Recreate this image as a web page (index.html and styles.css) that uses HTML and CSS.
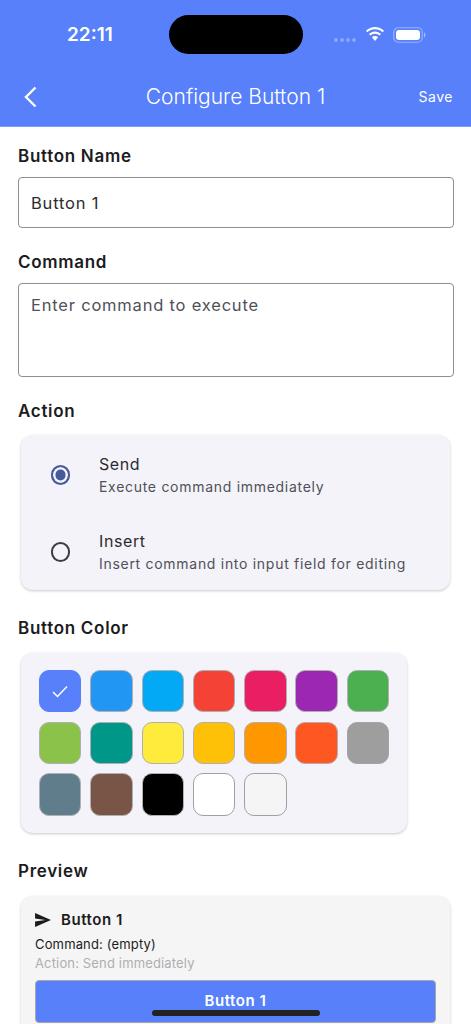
FILE: index.html
```html
<!DOCTYPE html>
<html lang="en">
<head>
<meta charset="utf-8">
<title>Configure Button 1</title>
<link rel="stylesheet" href="styles.css">
</head>
<body>
<div class="screen">
  <header class="header">
    <div class="status">
      <span class="time">22:11</span>
      <span class="island"></span>
      <div class="status-icons">
        <span class="dots"><i></i><i></i><i></i><i></i></span>
        <svg class="wifi" width="20" height="15" viewBox="0 0 20 15"><path d="M10 2.200c3 0 5.700 1.200 7.700 3.100l1.300-1.500C16.600 1.500 13.500 0 10 0S3.400 1.500 1 3.800l1.300 1.500C4.300 3.400 7 2.200 10 2.200z" fill="#fff"/><path d="M10 6.700c1.800 0 3.400.7 4.600 1.800L16 7C14.400 5.500 12.300 4.600 10 4.600S5.600 5.500 4 7l1.400 1.500C6.600 7.400 8.200 6.700 10 6.700z" fill="#fff"/><path d="M10 9.100c-1.200 0-2.300.5-3.100 1.200L10 14l3.100-3.700C12.300 9.600 11.200 9.100 10 9.100z" fill="#fff"/></svg>
        <svg class="battery" width="33" height="16" viewBox="0 0 33 16"><rect x=".75" y=".75" width="28.500" height="14.500" rx="4.500" fill="none" stroke="#fff" stroke-opacity=".4" stroke-width="1.200"/><rect x="3" y="3" width="24" height="10" rx="3" fill="#fff"/><path d="M31 5.500c1 .3 1.500 1.300 1.500 2.500s-.5 2.200-1.500 2.500z" fill="#fff" fill-opacity=".45"/></svg>
      </div>
    </div>
    <nav class="nav">
      <svg class="back" width="14" height="22" viewBox="0 0 14 22"><path d="M12.500 1.500 3 11l9.500 9.500" fill="none" stroke="#fff" stroke-width="2.400"/></svg>
      <h1 class="title">Configure Button 1</h1>
      <span class="save">Save</span>
    </nav>
  </header>

  <main class="content">
    <h2 class="label label-first">Button Name</h2>
    <div class="field field-name">Button 1</div>

    <h2 class="label label-command">Command</h2>
    <div class="field field-command">Enter command to execute</div>

    <h2 class="label label-action">Action</h2>
    <section class="card action-card">
      <div class="option option-send">
        <span class="radio radio-on"></span>
        <div>
          <div class="option-title">Send</div>
          <div class="option-desc">Execute command immediately</div>
        </div>
      </div>
      <div class="option">
        <span class="radio"></span>
        <div>
          <div class="option-title">Insert</div>
          <div class="option-desc">Insert command into input field for editing</div>
        </div>
      </div>
    </section>

    <h2 class="label label-color">Button Color</h2>
    <section class="card color-card">
      <div class="swatch s-selected"><svg width="16" height="13" viewBox="0 0 16 13"><path d="M1 7l4.500 4.500L15 1.500" fill="none" stroke="#fff" stroke-width="1.500"/></svg></div>
      <div class="swatch s-blue"></div>
      <div class="swatch s-sky"></div>
      <div class="swatch s-red"></div>
      <div class="swatch s-pink"></div>
      <div class="swatch s-purple"></div>
      <div class="swatch s-green"></div>
      <div class="swatch s-lime"></div>
      <div class="swatch s-teal"></div>
      <div class="swatch s-yellow"></div>
      <div class="swatch s-amber"></div>
      <div class="swatch s-orange"></div>
      <div class="swatch s-deep"></div>
      <div class="swatch s-grey"></div>
      <div class="swatch s-slate"></div>
      <div class="swatch s-brown"></div>
      <div class="swatch s-black"></div>
      <div class="swatch s-white"></div>
      <div class="swatch s-smoke"></div>
    </section>

    <h2 class="label label-preview">Preview</h2>
    <section class="card preview-card">
      <div class="preview-head">
        <svg width="16" height="14" viewBox="0 0 17 15"><path d="M0 0 17 7.500 0 15l0-5.800L11 7.500 0 5.800z" fill="#1c1c1e"/></svg>
        <span>Button 1</span>
      </div>
      <div class="preview-command">Command: (empty)</div>
      <div class="preview-action">Action: Send immediately</div>
      <div class="preview-button">Button 1</div>
    </section>
  </main>
  <div class="home-bar"></div>
</div>
</body>
</html>
```
FILE: styles.css
```css
* { box-sizing: border-box; }
html, body { margin: 0; padding: 0; }
body { font-family: Inter, "Liberation Sans", sans-serif; background: #fff; color: #1c1c1e; }
.screen { position: relative; width: 471px; height: 1024px; overflow: hidden; }

.header { height: 127px; background: #5780fa; border-bottom: 1px solid #7d9dfb; color: #fff; }
.status { position: relative; height: 69px; padding-top: 15px; }
.time { position: absolute; left: 67px; top: 24px; font-size: 19px; line-height: 22px; font-weight: 600; }
.island { display: block; width: 134px; height: 39px; margin: 0 auto; border-radius: 20px; background: #000; }
.status-icons { position: absolute; left: 334px; top: 27px; display: flex; align-items: flex-start; }
.dots { display: flex; gap: 2px; margin: 11px 9px 0 0; }
.dots i { width: 4px; height: 4px; border-radius: 50%; background: rgba(255,255,255,.3); }
.wifi { margin-right: 8px; }
.nav { display: grid; grid-template-columns: 1fr auto 1fr; align-items: center; height: 56px; padding: 0 18px 0 23px; }
.back { justify-self: start; }
.title { margin: 0 5px 0 0; text-align: center; font-size: 21px; line-height: 26px; font-weight: 300; }
.save { justify-self: end; padding-bottom: 2px; font-size: 14px; letter-spacing: .5px; font-weight: 400; }

.content { padding: 0 18px; }
.label { margin: 0; font-size: 17px; line-height: 20px; font-weight: 600; letter-spacing: .7px; }
.label-first { padding-top: 19px; }
.label-command { margin-top: 24px; }
.label-action { margin-top: 24px; }
.label-color { margin-top: 28px; }
.label-preview { margin-top: 28px; }

.field { margin-top: 11px; width: 435.500px; border: 1px solid #8e8e93; border-radius: 4px; padding: 0 12px; font-size: 16.500px; letter-spacing: .8px; color: #2c2c2e; }
.field-name { height: 51px; line-height: 50px; }
.field-command { height: 94px; line-height: 20px; padding-top: 11px; color: #505058; }

.card { margin: 14px 0 0 3px; border-radius: 12px; box-shadow: 0 1px 3px rgba(0,0,0,.22); }
.action-card { width: 429px; height: 155px; background: #f3f3f9; padding: 18px 0 0 29.700px; }
.option { display: flex; align-items: center; gap: 28.800px; }
.option-send { margin-bottom: 33px; }
.radio { flex: none; width: 19.500px; height: 19.500px; border: 2px solid #3c3c43; border-radius: 50%; }
.radio-on { border-color: #475a9c; background: #475a9c; box-shadow: inset 0 0 0 2.500px #f3f3f9; }
.option-title { font-size: 16px; line-height: 22px; letter-spacing: .6px; color: #2c2c2e; }
.option-desc { margin-top: 2px; font-size: 14px; line-height: 20px; letter-spacing: .71px; color: #505058; }

.color-card { margin-top: 15px; width: 386px; height: 180px; background: #f3f3f9; padding: 17px 18px; display: grid; grid-template-columns: repeat(7, 42.400px); grid-auto-rows: 42.400px; gap: 9.300px 8.900px; }
.swatch { border: 1px solid #b0b0b4; border-radius: 10px; display: flex; align-items: center; justify-content: center; }
.s-selected { background: #5780fa; border-color: #5780fa; }
.s-blue { background: #2196f3; }
.s-sky { background: #03a9f4; }
.s-red { background: #f44336; }
.s-pink { background: #e91e63; }
.s-purple { background: #9c27b0; }
.s-green { background: #4caf50; }
.s-lime { background: #8bc34a; }
.s-teal { background: #009688; }
.s-yellow { background: #ffeb3b; }
.s-amber { background: #ffc107; }
.s-orange { background: #ff9800; }
.s-deep { background: #ff5722; }
.s-grey { background: #9e9e9e; border-color: #a4a4a6; }
.s-slate { background: #607d8b; }
.s-brown { background: #795548; }
.s-black { background: #000; }
.s-white { background: #fff; border-color: #a0a0a4; }
.s-smoke { background: #f5f5f5; border-color: #a0a0a4; }

.preview-card { margin-top: 15px; width: 429px; height: 160px; background: #f5f5f5; padding: 15px 14px; }
.preview-head { display: flex; align-items: center; gap: 10px; font-size: 15px; line-height: 18px; font-weight: 600; letter-spacing: .55px; }
.preview-command { margin-top: 6px; font-size: 13px; line-height: 18px; letter-spacing: .15px; }
.preview-action { margin-top: 1px; font-size: 13px; line-height: 18px; letter-spacing: .15px; color: #aeaeb2; }
.preview-button { margin-top: 8px; height: 42.500px; border: 1px solid #a8a8ac; border-radius: 4px; background: #5780fa; color: #fff; text-align: center; font-size: 15px; line-height: 40px; font-weight: 600; letter-spacing: .55px; }

.home-bar { position: absolute; left: 152px; top: 1009.500px; width: 168px; height: 6px; border-radius: 3px; background: #222; }
```
